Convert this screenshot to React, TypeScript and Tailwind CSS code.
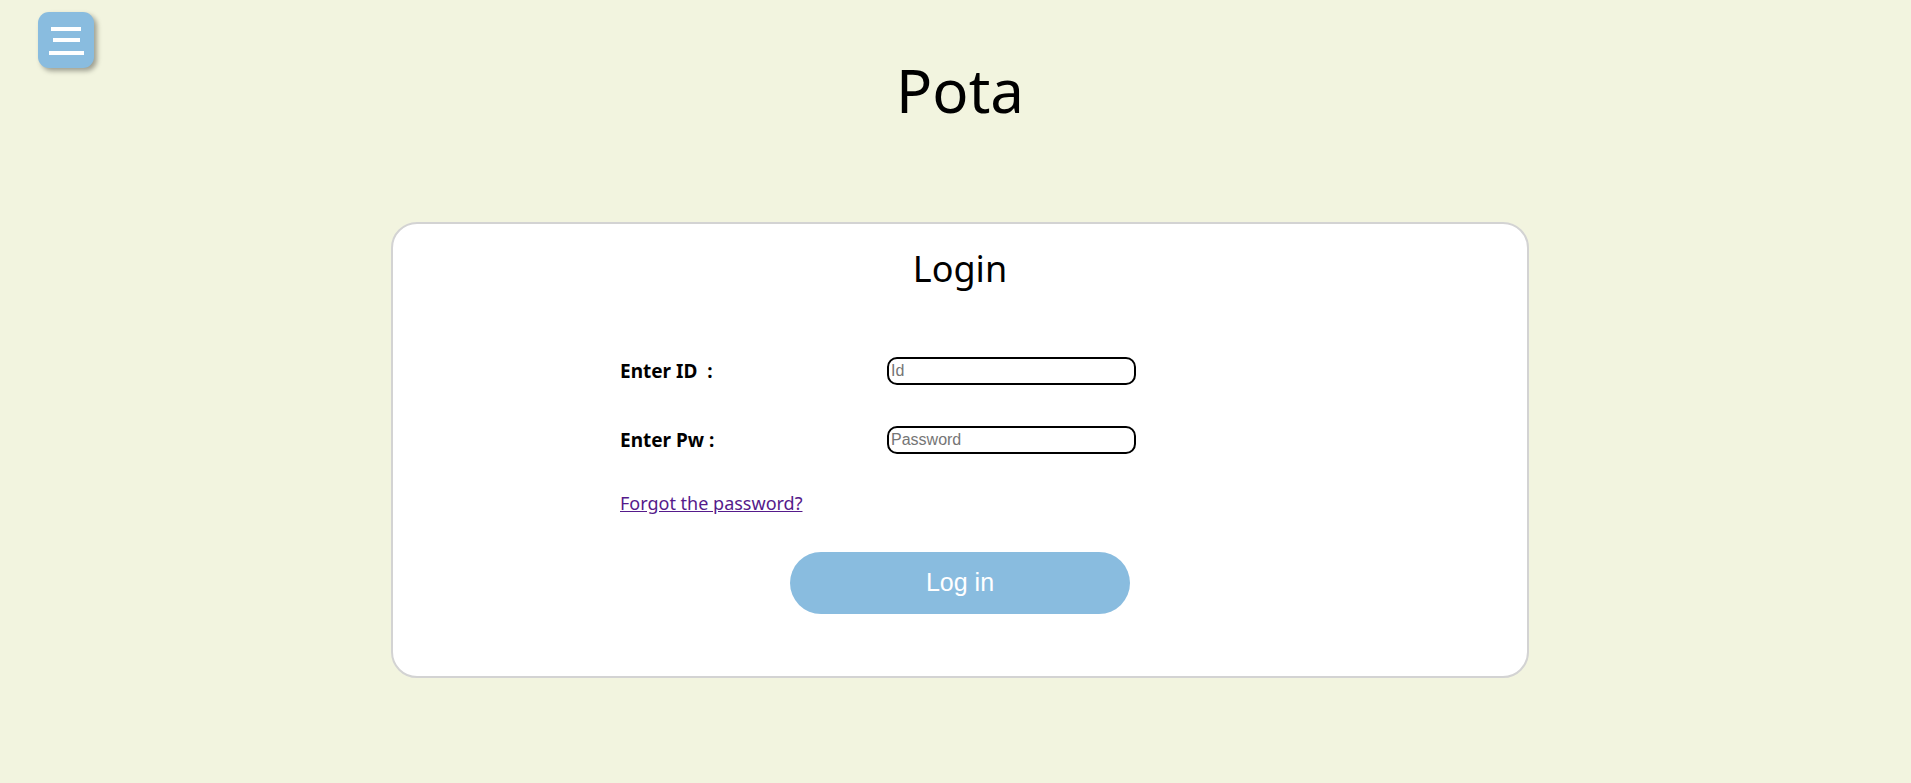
import { useState } from "react";

const MenuButton = () => (
  <button
    type="button"
    className="absolute left-[38px] top-[12px] flex h-[56px] w-[56px] flex-col items-center rounded-[11px] bg-[#89bcdf] pt-[15px] shadow-[3px_3px_5px_rgba(0,0,0,0.35)]"
  >
    <span className="block h-[4px] w-[30px] bg-white" />
    <span className="mt-[7px] block h-[4px] w-[27px] bg-white" />
    <span className="mt-[9px] block h-[4px] w-[35px] bg-white" />
  </button>
);

export default function App() {
  const [id, setId] = useState("");
  const [pw, setPw] = useState("");

  return (
    <div className="relative min-h-[783px] w-full bg-[#f2f4df] pl-[9px] font-['Noto_Sans',sans-serif] text-black">
      <MenuButton />

      <h1 className="pt-[58px] text-center text-[60px] leading-[64px] font-normal">Pota</h1>

      <div className="mt-[100px] flex justify-center">
        <div className="flex w-[1138px] flex-col rounded-[26px] border-2 border-[#d3d3d3] bg-white pt-[26px] pb-[62px]">
          <h2 className="text-center text-[36px] leading-[38px] font-normal">Login</h2>

          <div className="ml-[227px] mt-[69px] flex flex-col">
            <div className="flex h-[28px] items-center">
              <label className="w-[267px] text-[19px] font-bold whitespace-pre">Enter ID  :</label>
              <input
                value={id}
                onChange={(e) => setId(e.target.value)}
                placeholder="Id"
                className="h-[28px] w-[249px] rounded-[10px] border-2 border-black px-[2px] font-['Liberation_Sans',sans-serif] text-[16px] outline-none placeholder:text-[#757575]"
              />
            </div>
            <div className="mt-[41px] flex h-[28px] items-center">
              <label className="w-[267px] text-[19px] font-bold">Enter Pw :</label>
              <input
                type="password"
                value={pw}
                onChange={(e) => setPw(e.target.value)}
                placeholder="Password"
                className="h-[28px] w-[249px] rounded-[10px] border-2 border-black px-[2px] font-['Liberation_Sans',sans-serif] text-[16px] outline-none placeholder:text-[#757575]"
              />
            </div>
            <a href="#" className="mt-[37px] self-start text-[18px] leading-[24px] text-[#551a8b] underline">
              Forgot the password?
            </a>
          </div>

          <button
            type="button"
            className="mx-auto mt-[37px] h-[62px] w-[340px] rounded-full bg-[#89bcdf] font-['Liberation_Sans',sans-serif] text-[25px] text-white"
          >
            Log in
          </button>
        </div>
      </div>
    </div>
  );
}
